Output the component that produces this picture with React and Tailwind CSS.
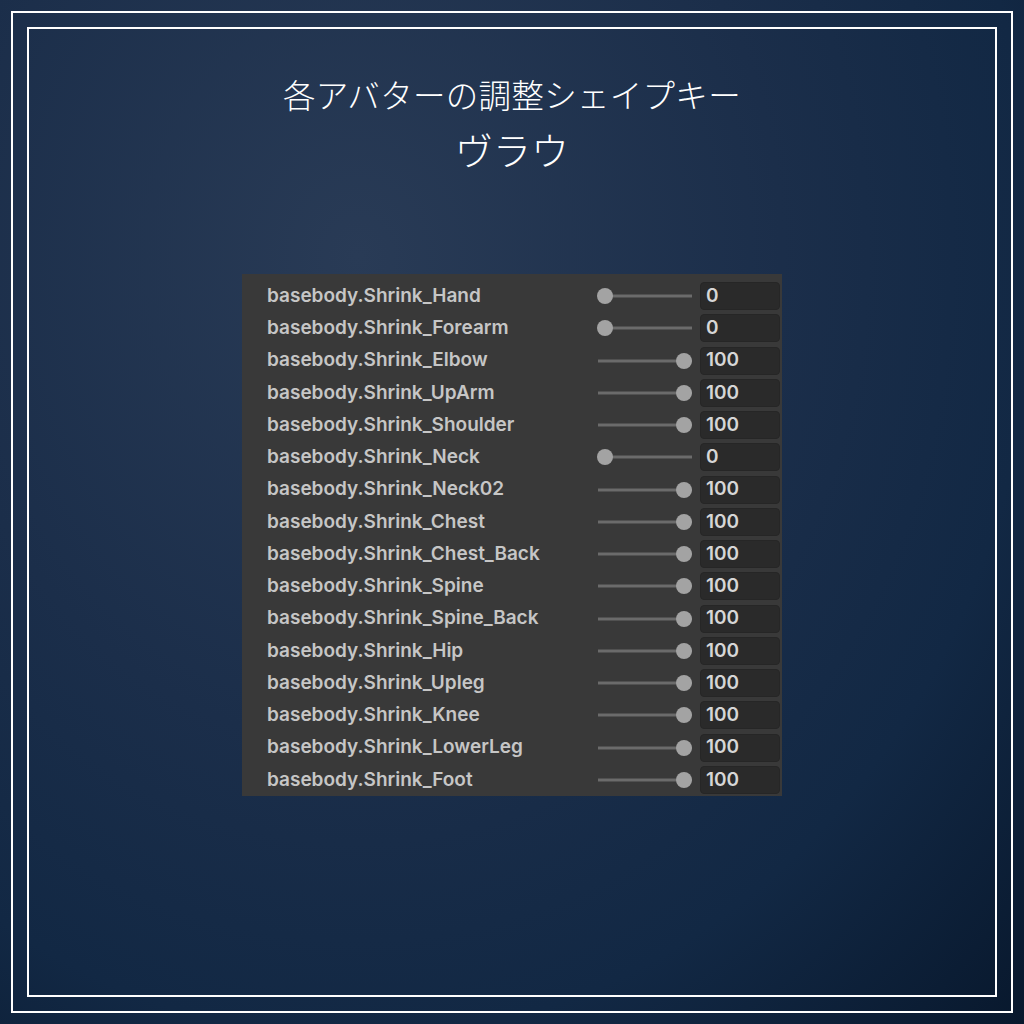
import React from 'react';

const shapeKeys = [
  ['basebody.Shrink_Hand', 0],
  ['basebody.Shrink_Forearm', 0],
  ['basebody.Shrink_Elbow', 100],
  ['basebody.Shrink_UpArm', 100],
  ['basebody.Shrink_Shoulder', 100],
  ['basebody.Shrink_Neck', 0],
  ['basebody.Shrink_Neck02', 100],
  ['basebody.Shrink_Chest', 100],
  ['basebody.Shrink_Chest_Back', 100],
  ['basebody.Shrink_Spine', 100],
  ['basebody.Shrink_Spine_Back', 100],
  ['basebody.Shrink_Hip', 100],
  ['basebody.Shrink_Upleg', 100],
  ['basebody.Shrink_Knee', 100],
  ['basebody.Shrink_LowerLeg', 100],
  ['basebody.Shrink_Foot', 100],
];

const Slider = ({ value }) => (
  <div className="relative w-[94px] h-full">
    <div className="absolute left-0 right-0 top-1/2 -translate-y-1/2 h-[3px] bg-[#6b6b6b]" />
    <div
      className="absolute top-1/2 -translate-y-1/2 -translate-x-1/2 w-4 h-4 rounded-full bg-[#a3a3a3]"
      style={{ left: `${7 + (value / 100) * 79}px` }}
    />
  </div>
);

const ShapeKeyRow = ({ name, value }) => (
  <div className="flex items-center h-[32.25px]">
    <div className="w-[356px] pl-[25px] text-[19px] font-semibold text-[#c6c6c6] whitespace-nowrap">
      {name}
    </div>
    <Slider value={value} />
    <div className="ml-[8px] w-[80px] h-[28px] rounded-[4px] bg-[#2a2a2a] border border-[#262626] flex items-center pl-[5px] text-[19px] font-semibold text-[#d6d6d6]">
      {value}
    </div>
  </div>
);

export default function App() {
  return (
    <div
      className="w-[1024px] h-[1024px] p-[11px] bg-[radial-gradient(ellipse_at_35%_25%,#293b56_0%,#1b2e4a_45%,#122844_72%,#08182d_100%)]"
      style={{ fontFamily: 'Inter, "Noto Sans", "Noto Sans CJK JP", sans-serif' }}
    >
      <div className="w-full h-full border-2 border-white p-[14px]">
        <div className="w-full h-full border-2 border-white flex flex-col items-center">
          <h1
            className="mt-[45px] text-[32.5px] leading-[40px] font-light text-white tracking-[0.3px]"
            style={{ fontFamily: '"Noto Sans CJK JP", sans-serif' }}
          >
            各アバターの調整シェイプキー
          </h1>
          <h2
            className="mt-[12px] text-[38px] leading-[46px] font-light text-white"
            style={{ fontFamily: '"Noto Sans CJK JP", sans-serif' }}
          >
            ヴラウ
          </h2>
          <div className="mt-[102px] w-[540px] h-[522px] bg-[#393939] pt-[6px]">
            {shapeKeys.map(([name, value]) => (
              <ShapeKeyRow key={name} name={name} value={value} />
            ))}
          </div>
        </div>
      </div>
    </div>
  );
}
